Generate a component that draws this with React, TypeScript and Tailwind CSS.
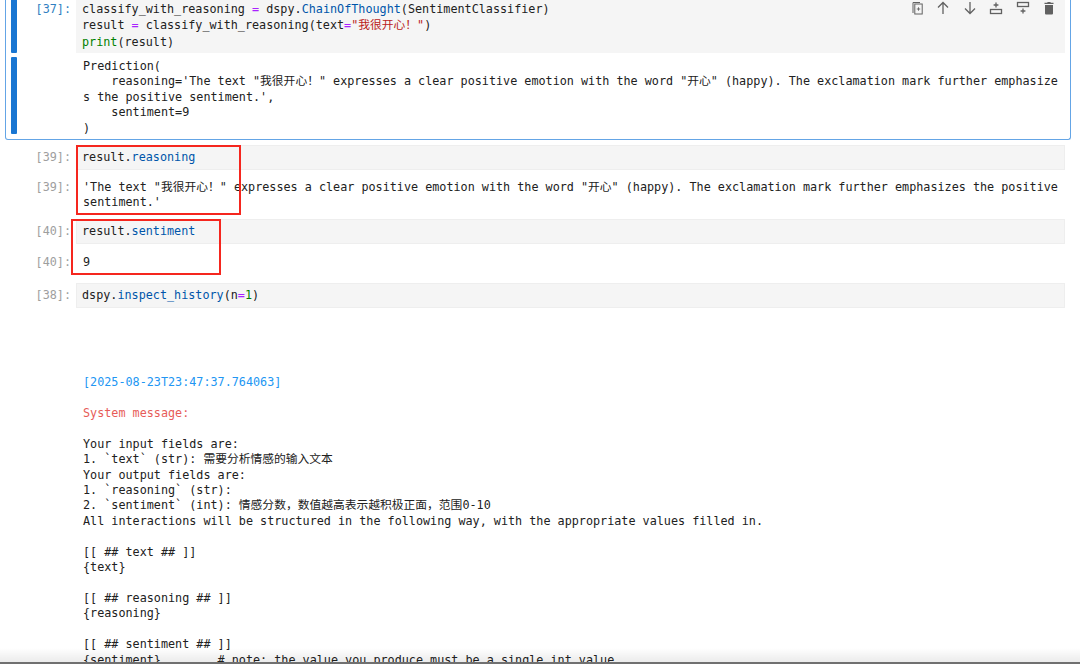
const mono = "font-['DejaVu_Sans_Mono','Noto_Sans_CJK_SC',monospace]";

function Prompt({ n, active }: { n: number; active?: boolean }) {
  return (
    <div className={`shrink-0 text-right text-[11.77px] ${active ? "text-[#307fc1]" : "text-[#9e9e9e]"}`}>[{n}]:</div>
  );
}

function ToolbarIcon({ children }: { children: React.ReactNode }) {
  return (
    <svg width="14" height="14" viewBox="0 0 14 14" className="fill-none stroke-[#616161]" strokeWidth="1.3">
      {children}
    </svg>
  );
}

function Toolbar() {
  return (
    <div className="absolute top-[1px] left-[909.5px] flex gap-[12.5px]">
      <ToolbarIcon>
        <path d="M3 12V1.5h7" strokeWidth="1" />
        <rect x="4.8" y="3" width="7.4" height="10" strokeWidth="1" />
        <path d="M8.5 6.3v3.4M6.8 8h3.4" strokeWidth="0.9" />
      </ToolbarIcon>
      <ToolbarIcon>
        <path d="M7 13V1.5M2 6.5l5-5 5 5" />
      </ToolbarIcon>
      <ToolbarIcon>
        <path d="M7 1v11.5M2 7.5l5 5 5-5" />
      </ToolbarIcon>
      <ToolbarIcon>
        <rect x="1.5" y="8.5" width="11" height="4" />
        <path d="M7 1.5v5M4.6 4h4.8" />
      </ToolbarIcon>
      <ToolbarIcon>
        <rect x="1.5" y="1.5" width="11" height="4" />
        <path d="M7 7.5v5M4.6 10h4.8" />
      </ToolbarIcon>
      <svg width="14" height="14" viewBox="0 0 14 14" className="fill-[#616161]">
        <path d="M3 4h8v8.5a1 1 0 0 1-1 1H4a1 1 0 0 1-1-1zM2.5 1.7h2.6l.6-.7h2.6l.6.7h2.6V3h-9z" />
      </svg>
    </div>
  );
}

function CodeInput({ n, children }: { n: number; children: React.ReactNode }) {
  return (
    <div className="flex w-[1065px] gap-[5px]">
      <div className="w-[71px] leading-[24px]">
        <Prompt n={n} />
      </div>
      <div className="h-[25px] w-[989px] border border-[#eeeeee] bg-[#f5f5f5] pl-[5px] text-[11.77px] leading-[23px] whitespace-pre text-[#212121]">
        {children}
      </div>
    </div>
  );
}

function Output({ n, lines }: { n: number; lines: string[] }) {
  return (
    <div className="flex w-[1065px] gap-[5px]">
      <div className="w-[71px] leading-[15.4px]">
        <Prompt n={n} />
      </div>
      <div className="pl-[7px] text-[11.77px] leading-[15.4px] whitespace-pre text-[#212121]">
        {lines.map((l, i) => (
          <div key={i}>{l}</div>
        ))}
      </div>
    </div>
  );
}

const historyLines = [
  "",
  "Your input fields are:",
  "1. `text` (str): 需要分析情感的输入文本",
  "Your output fields are:",
  "1. `reasoning` (str):",
  "2. `sentiment` (int): 情感分数，数值越高表示越积极正面，范围0-10",
  "All interactions will be structured in the following way, with the appropriate values filled in.",
  "",
  "[[ ## text ## ]]",
  "{text}",
  "",
  "[[ ## reasoning ## ]]",
  "{reasoning}",
  "",
  "[[ ## sentiment ## ]]",
  "{sentiment}        # note: the value you produce must be a single int value",
];

export default function App() {
  return (
    <div className={`relative h-[664px] w-[1080px] overflow-hidden bg-white ${mono}`}>
      {/* selected cell, cut off by the top of the picture */}
      <div className="ml-[5px] flex h-[140px] w-[1066px] flex-col gap-[4px] rounded-b-[3px] border border-t-0 border-[#64a5e6] pl-[5px]">
        <div className="flex h-[53px]">
          <div className="h-full w-[6px] rounded-b-[1px] bg-[#1976d2]" />
          <div className="w-[54px] pt-[1px] leading-[16.4px]">
            <Prompt n={37} active />
          </div>
          <div className="ml-[5px] w-[989px] bg-[#f5f5f5] pt-[1px] pl-[6px] text-[11.77px] leading-[16.4px] whitespace-pre text-[#212121]">
            <div>
              classify_with_reasoning <span className="text-[#aa22ff]">=</span> dspy.
              <span className="text-[#0055aa]">ChainOfThought</span>(SentimentClassifier)
            </div>
            <div>
              result <span className="text-[#aa22ff]">=</span> classify_with_reasoning(text
              <span className="text-[#aa22ff]">=</span>
              <span className="text-[#ba2121]">"我很开心！"</span>)
            </div>
            <div>
              <span className="text-[#008000]">print</span>(result)
            </div>
          </div>
        </div>
        <div className="flex h-[77px]">
          <div className="h-full w-[6px] rounded-[1px] bg-[#1976d2]" />
          <div className="ml-[66px] pt-[2px] text-[11.77px] leading-[15.4px] whitespace-pre text-[#212121]">
            <div>Prediction(</div>
            <div>{`    reasoning='The text "我很开心！" expresses a clear positive emotion with the word "开心" (happy). The exclamation mark further emphasize`}</div>
            <div>{`s the positive sentiment.',`}</div>
            <div>{`    sentiment=9`}</div>
            <div>)</div>
          </div>
        </div>
      </div>
      <Toolbar />

      <div className="mt-[5px]">
        <CodeInput n={39}>
          result.<span className="text-[#0055aa]">reasoning</span>
        </CodeInput>
      </div>
      <div className="mt-[10px]">
        <Output
          n={39}
          lines={[
            `'The text "我很开心！" expresses a clear positive emotion with the word "开心" (happy). The exclamation mark further emphasizes the positive`,
            `sentiment.'`,
          ]}
        />
      </div>
      <div className="mt-[8px]">
        <CodeInput n={40}>
          result.<span className="text-[#0055aa]">sentiment</span>
        </CodeInput>
      </div>
      <div className="mt-[11px]">
        <Output n={40} lines={["9"]} />
      </div>
      <div className="mt-[13px]">
        <CodeInput n={38}>
          dspy.<span className="text-[#0055aa]">inspect_history</span>(n<span className="text-[#aa22ff]">=</span>
          <span className="text-[#008000]">1</span>)
        </CodeInput>
      </div>

      {/* inspect_history output */}
      <div className="mt-[67px] pl-[83px] text-[11.77px] leading-[15.4px] whitespace-pre text-[#212121]">
        <div className="text-[#2196f3]">[2025-08-23T23:47:37.764063]</div>
        <div>{" "}</div>
        <div className="text-[#e75c58]">System message:</div>
        {historyLines.map((l, i) => (
          <div key={i}>{l || " "}</div>
        ))}
      </div>

      {/* red annotation boxes */}
      <div className="absolute top-[145px] left-[76px] h-[70px] w-[165px] border-2 border-[#f5261e]" />
      <div className="absolute top-[219px] left-[71px] h-[56px] w-[150px] border-2 border-[#f5261e]" />

      {/* window edge at the bottom */}
      <div className="absolute right-0 bottom-0 left-0 h-[16px] border-b-2 border-[#707070] bg-gradient-to-b from-transparent to-[#00000014]" />
    </div>
  );
}
